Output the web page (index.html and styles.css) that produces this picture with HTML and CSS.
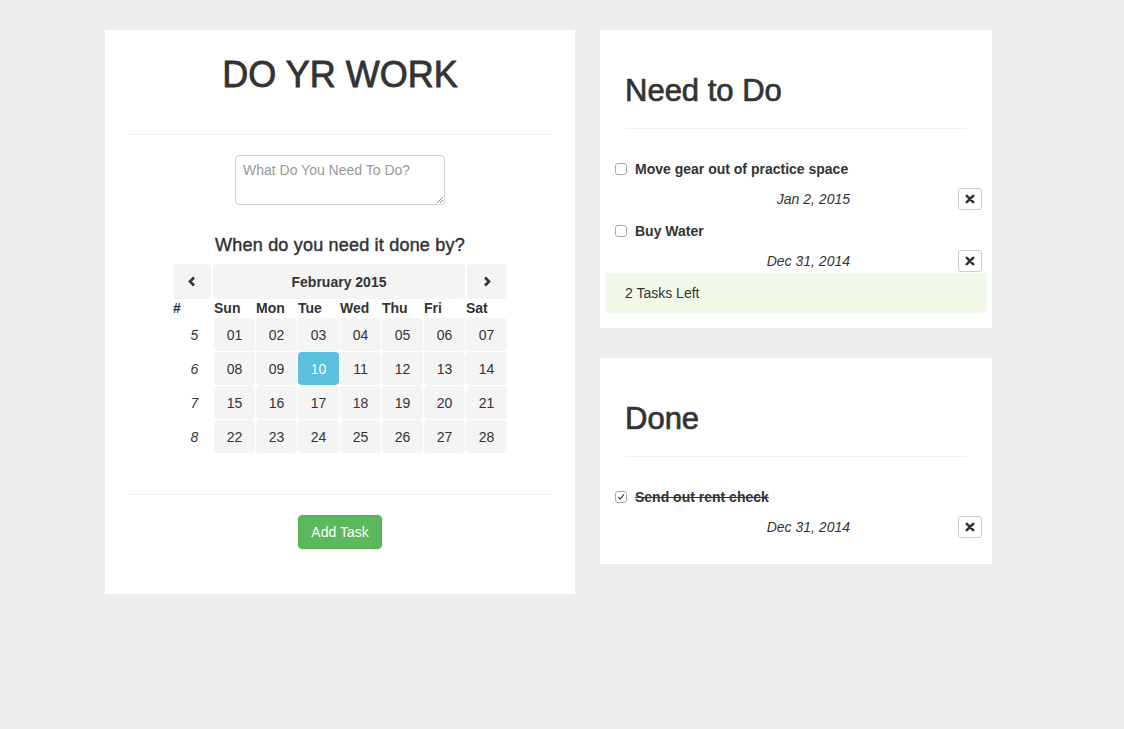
FILE: index.html
```html
<!DOCTYPE html>
<html>
<head>
<meta charset="utf-8">
<link rel="stylesheet" href="styles.css">
</head>
<body>
<div class="page">
  <div class="panel main">
    <h1 class="title">DO YR WORK</h1>
    <div class="form">
      <div class="ta">What Do You Need To Do?<span class="grip"><svg width="7" height="7" viewBox="0 0 7 7"><path d="M1 7 L7 1 M4 7 L7 4" stroke="#777" stroke-width="0.8" fill="none"/></svg></span></div>
      <h4 class="when">When do you need it done by?</h4>
      <div class="cal">
        <div class="calnav">
          <div class="navbtn prev"><svg width="10" height="11" viewBox="0 0 10 11"><path d="M7 1.5 L3 5.5 L7 9.5" stroke="#333" stroke-width="2.6" fill="none" stroke-linejoin="miter"/></svg></div>
          <div class="navbtn month">February 2015</div>
          <div class="navbtn next"><svg width="10" height="11" viewBox="0 0 10 11"><path d="M3 1.5 L7 5.5 L3 9.5" stroke="#333" stroke-width="2.6" fill="none" stroke-linejoin="miter"/></svg></div>
        </div>
        <div class="grid">
          <div class="dh wk">#</div><div class="dh">Sun</div><div class="dh">Mon</div><div class="dh">Tue</div><div class="dh">Wed</div><div class="dh">Thu</div><div class="dh">Fri</div><div class="dh">Sat</div>
          <div class="wn">5</div><div class="d">01</div><div class="d">02</div><div class="d">03</div><div class="d">04</div><div class="d">05</div><div class="d">06</div><div class="d">07</div>
          <div class="wn">6</div><div class="d">08</div><div class="d">09</div><div class="d sel">10</div><div class="d">11</div><div class="d">12</div><div class="d">13</div><div class="d">14</div>
          <div class="wn">7</div><div class="d">15</div><div class="d">16</div><div class="d">17</div><div class="d">18</div><div class="d">19</div><div class="d">20</div><div class="d">21</div>
          <div class="wn">8</div><div class="d">22</div><div class="d">23</div><div class="d">24</div><div class="d">25</div><div class="d">26</div><div class="d">27</div><div class="d">28</div>
        </div>
      </div>
    </div>
    <div class="footer">
      <div class="addbtn">Add Task</div>
    </div>
  </div>

  <div class="side">
    <div class="panel list">
      <h2 class="ltitle">Need to Do</h2>
      <div class="tasks">
        <div class="task">
          <div class="tline"><span class="cb"></span><span class="tname">Move gear out of practice space</span></div>
          <div class="meta"><span class="date">Jan 2, 2015</span><span class="xbtn"><svg width="10" height="10" viewBox="0 0 10 10"><path d="M1.8 1.8 L8.2 8.2 M8.2 1.8 L1.8 8.2" stroke="#333" stroke-width="2.6" stroke-linecap="round"/></svg></span></div>
        </div>
        <div class="task">
          <div class="tline"><span class="cb"></span><span class="tname">Buy Water</span></div>
          <div class="meta"><span class="date">Dec 31, 2014</span><span class="xbtn"><svg width="10" height="10" viewBox="0 0 10 10"><path d="M1.8 1.8 L8.2 8.2 M8.2 1.8 L1.8 8.2" stroke="#333" stroke-width="2.6" stroke-linecap="round"/></svg></span></div>
        </div>
      </div>
      <div class="left">2 Tasks Left</div>
    </div>

    <div class="panel list done">
      <h2 class="ltitle">Done</h2>
      <div class="tasks">
        <div class="task">
          <div class="tline"><span class="cb checked"><svg width="8" height="8" viewBox="0 0 8 8"><path d="M1.3 4.2 L3.2 6.2 L6.8 1.5" stroke="#333" stroke-width="1.2" fill="none"/></svg></span><span class="tname strike">Send out rent check</span></div>
          <div class="meta"><span class="date">Dec 31, 2014</span><span class="xbtn"><svg width="10" height="10" viewBox="0 0 10 10"><path d="M1.8 1.8 L8.2 8.2 M8.2 1.8 L1.8 8.2" stroke="#333" stroke-width="2.6" stroke-linecap="round"/></svg></span></div>
        </div>
      </div>
    </div>
  </div>
</div>
</body>
</html>
```

FILE: styles.css
```css
* { box-sizing: border-box; }
html, body { margin: 0; padding: 0; }
body {
  background: #ededed;
  font-family: "Liberation Sans", Arial, sans-serif;
  font-size: 14px;
  color: #333;
  width: 1124px;
  height: 729px;
}
.page {
  display: flex;
  align-items: flex-start;
  gap: 25px;
  padding: 30px 0 0 105px;
}
.panel { background: #fff; }
.main {
  width: 470px;
  padding: 0 24px 45px;
}
.title {
  margin: 25px 0 0;
  font-size: 36px;
  line-height: 40px;
  font-weight: normal;
  -webkit-text-stroke: 0.8px #333;
  text-align: center;
  padding-bottom: 39px;
  border-bottom: 1px solid #eee;
  color: #333;
}
.form {
  display: flex;
  flex-direction: column;
  align-items: center;
  padding-top: 20px;
  padding-bottom: 41px;
  border-bottom: 1px solid #eee;
}
.ta {
  position: relative;
  width: 210px;
  height: 50px;
  border: 1px solid #ccc;
  border-radius: 4px;
  color: #999;
  font-size: 14px;
  line-height: 18px;
  padding: 5px 7px;
}
.grip { position: absolute; right: 1px; bottom: 1px; line-height: 0; }
.when {
  margin: 30px 0 9px;
  font-size: 18px;
  line-height: 20px;
  font-weight: normal;
  letter-spacing: 0.2px;
  -webkit-text-stroke: 0.45px #333;
  color: #333;
}
.cal { width: 334px; }
.calnav {
  display: flex;
  gap: 2px;
  height: 35px;
}
.navbtn {
  background: #f4f4f4;
  border-radius: 4px;
  display: flex;
  align-items: center;
  justify-content: center;
}
.prev { width: 38px; }
.month { flex: 1; font-weight: bold; }
.next { width: 40px; }
.grid {
  display: grid;
  grid-template-columns: 39px repeat(7, 41px);
  grid-template-rows: 18px;
  grid-auto-rows: 33px;
  gap: 1px;
  margin-left: 1px;
}
.grid .dh {
  height: 18px;
  line-height: 18px;
  font-weight: bold;
}
.wk { text-align: left; margin-left: -1px; }
.wn {
  font-style: italic;
  display: flex;
  align-items: center;
  justify-content: center;
  padding-left: 2px;
}
.d {
  background: #f4f4f4;
  border-radius: 4px;
  display: flex;
  align-items: center;
  justify-content: center;
}
.d.sel { background: #5bc0de; color: #fff; }
.footer {
  display: flex;
  justify-content: center;
  padding-top: 20px;
}
.addbtn {
  width: 84px;
  height: 34px;
  background: #5cb85c;
  border: 1px solid #4cae4c;
  border-radius: 4px;
  color: #fff;
  font-size: 14px;
  display: flex;
  align-items: center;
  justify-content: center;
}
.side {
  display: flex;
  flex-direction: column;
  gap: 30px;
}
.list {
  width: 392px;
  padding: 0 5px 15px;
}
.ltitle {
  margin: 0 20px;
  padding-top: 44px;
  font-size: 31px;
  line-height: 34px;
  font-weight: normal;
  -webkit-text-stroke: 0.7px #333;
  padding-bottom: 20px;
  border-bottom: 1px solid #eee;
}
.tasks {
  display: flex;
  flex-direction: column;
  gap: 11px;
  padding-top: 30px;
}
.done .tasks { padding-bottom: 11px; }
.task { padding: 0 5px 0 10px; }
.tline {
  display: flex;
  align-items: center;
  height: 20px;
}
.cb {
  width: 12px;
  height: 12px;
  border: 1px solid #aaa;
  border-radius: 3px;
  background: #fff;
  margin-right: 8px;
  display: flex;
  align-items: center;
  justify-content: center;
}
.tname { font-weight: bold; }
.strike { text-decoration: line-through; }
.meta {
  display: flex;
  align-items: center;
  margin-top: 9px;
  height: 22px;
}
.date {
  width: 235px;
  text-align: right;
  font-style: italic;
}
.xbtn {
  margin-left: auto;
  width: 24px;
  height: 22px;
  border: 1px solid #ccc;
  border-radius: 3px;
  display: flex;
  align-items: center;
  justify-content: center;
  background: #fff;
}
.left {
  margin-top: 1px;
  height: 40px;
  background: #f3f9e8;
  padding-left: 20px;
  display: flex;
  align-items: center;
}
```
